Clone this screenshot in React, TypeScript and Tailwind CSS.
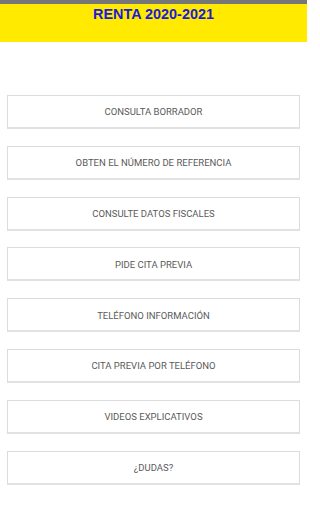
const items = [
  "CONSULTA BORRADOR",
  "OBTEN EL NÚMERO DE REFERENCIA",
  "CONSULTE DATOS FISCALES",
  "PIDE CITA PREVIA",
  "TELÉFONO INFORMACIÓN",
  "CITA PREVIA POR TELÉFONO",
  "VIDEOS EXPLICATIVOS",
  "¿DUDAS?",
];

export default function App() {
  return (
    <div className="w-[307px] h-[512px] bg-white overflow-hidden" style={{ fontFamily: "Roboto, 'Liberation Sans', sans-serif" }}>
      <div className="h-[4px] bg-[#767676]" />
      <div className="h-[38px] bg-[#ffea00] flex justify-center pt-[1px]">
        <h1 className="text-[14.4px] leading-[19px] font-bold text-[#1b1bd8]" style={{ fontFamily: "'Liberation Sans', Arial, sans-serif" }}>
          RENTA 2020-2021
        </h1>
      </div>
      <div className="flex flex-col gap-[16.8px] px-[7px] pt-[53px]">
        {items.map((label) => (
          <button
            key={label}
            className="h-[34px] w-[293px] bg-white border border-[#dcdcdc] border-b-[2px] border-b-[#e2e2e2] flex items-center justify-center pt-[2px] text-[9.5px] font-normal text-[#5a5a5a]"
          >
            {label}
          </button>
        ))}
      </div>
    </div>
  );
}
